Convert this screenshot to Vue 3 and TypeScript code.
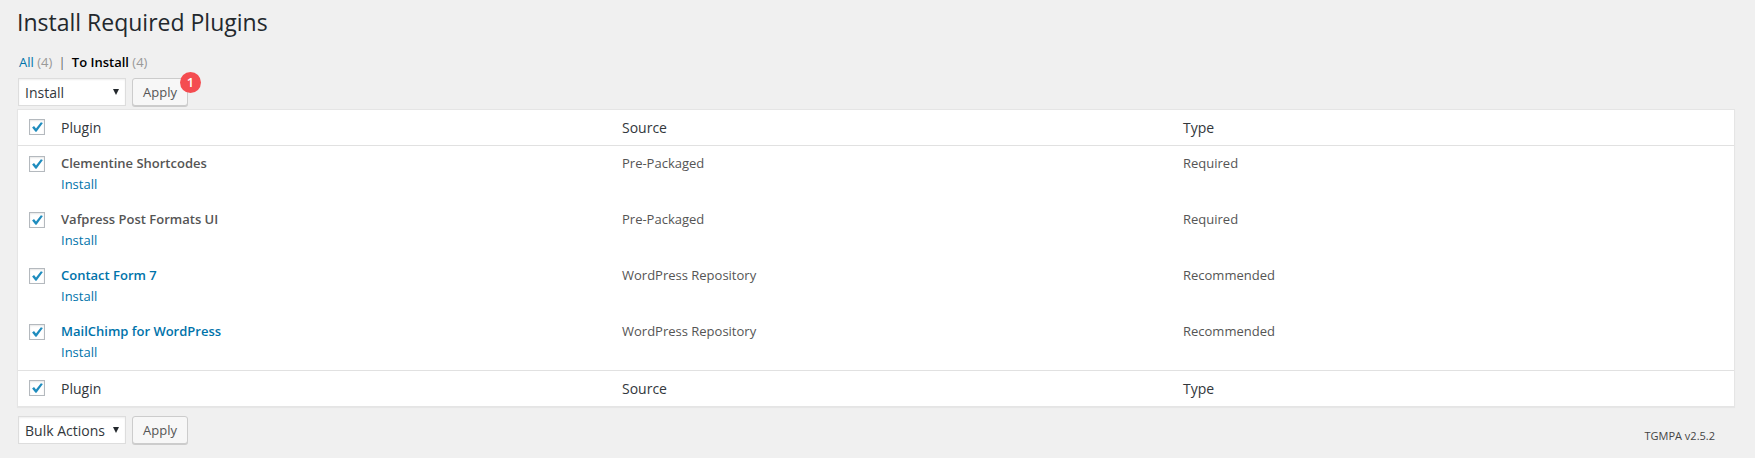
<script setup lang="ts">
import { reactive, ref } from 'vue'

interface Plugin {
  name: string
  source: string
  type: string
  linked: boolean
  checked: boolean
}

const plugins = reactive<Plugin[]>([
  { name: 'Clementine Shortcodes', source: 'Pre-Packaged', type: 'Required', linked: false, checked: true },
  { name: 'Vafpress Post Formats UI', source: 'Pre-Packaged', type: 'Required', linked: false, checked: true },
  { name: 'Contact Form 7', source: 'WordPress Repository', type: 'Recommended', linked: true, checked: true },
  { name: 'MailChimp for WordPress', source: 'WordPress Repository', type: 'Recommended', linked: true, checked: true },
])

const tick = 'M2.1 7.4L4 6.1L6 8.4L10.9 2.2L12.9 3L6.5 11.8H5.5Z'
const allChecked = ref(true)

function toggleAll(): void {
  allChecked.value = !allChecked.value
  plugins.forEach((p) => (p.checked = allChecked.value))
}
</script>

<template>
  <main class="page">
    <h1 class="title">Install Required Plugins</h1>
    <nav class="filters">
      <a class="link">All <span class="count">(4)</span></a>
      <span class="sep">|</span>
      <a class="current">To Install <span class="count">(4)</span></a>
    </nav>

    <div class="bar">
      <div class="select">
        <span>Install</span>
        <svg class="arrow" viewBox="0 0 6 6"><path d="M0 0H6L3 6Z" fill="#23282d" /></svg>
      </div>
      <button class="button" type="button">Apply<span class="badge">1</span></button>
    </div>

    <section class="table">
      <div class="row head">
        <span class="check" @click="toggleAll">
          <svg v-if="allChecked" viewBox="0 0 14 14"><path :d="tick" fill="#1e8cbe" /></svg>
        </span>
        <span>Plugin</span><span>Source</span><span>Type</span>
      </div>
      <div v-for="p in plugins" :key="p.name" class="row item">
        <span class="check" @click="p.checked = !p.checked">
          <svg v-if="p.checked" viewBox="0 0 14 14"><path :d="tick" fill="#1e8cbe" /></svg>
        </span>
        <div>
          <strong class="name" :class="{ linked: p.linked }">{{ p.name }}</strong>
          <a class="action">Install</a>
        </div>
        <span>{{ p.source }}</span>
        <span>{{ p.type }}</span>
      </div>
      <div class="row foot">
        <span class="check" @click="toggleAll">
          <svg v-if="allChecked" viewBox="0 0 14 14"><path :d="tick" fill="#1e8cbe" /></svg>
        </span>
        <span>Plugin</span><span>Source</span><span>Type</span>
      </div>
    </section>

    <div class="bar bottom">
      <div class="select">
        <span>Bulk Actions</span>
        <svg class="arrow" viewBox="0 0 6 6"><path d="M0 0H6L3 6Z" fill="#23282d" /></svg>
      </div>
      <button class="button" type="button">Apply</button>
      <span class="version">TGMPA v2.5.2</span>
    </div>
  </main>
</template>

<style>
body {
  background: #f0f0f0;
}
</style>

<style scoped>
.page {
  box-sizing: border-box;
  height: 458px;
  padding: 8px 20px 0 17px;
  overflow: hidden;
  background: #f0f0f0;
  color: #555;
  font: 13px/20px 'Open Sans', sans-serif;
}
.title {
  margin: 0;
  color: #23282d;
  font-size: 23px;
  font-weight: 400;
  line-height: 29px;
}
.filters {
  display: flex;
  margin-top: 15px;
  padding-left: 2px;
}
.link {
  color: #0073aa;
}
.current {
  color: #000;
  font-weight: 600;
}
.count {
  color: #999;
  font-weight: 400;
}
.sep {
  width: 19.5px;
  text-align: center;
  color: #666;
}
.bar {
  display: flex;
  align-items: flex-start;
  height: 31px;
  margin-top: 6px;
  padding-left: 1px;
}
.select {
  box-sizing: border-box;
  display: flex;
  align-items: center;
  justify-content: space-between;
  width: 108px;
  height: 28px;
  padding: 2px 6px 0;
  border: 1px solid #ddd;
  background: #fff;
  box-shadow: inset 0 1px 2px rgba(0, 0, 0, 0.07);
  color: #32373c;
  font-size: 14px;
}
.arrow {
  width: 6px;
  height: 6px;
  margin-bottom: 2px;
}
.button {
  position: relative;
  box-sizing: border-box;
  width: 56px;
  height: 28px;
  margin-left: 6px;
  padding: 0;
  border: 1px solid #ccc;
  border-radius: 3px;
  background: #f7f7f7;
  box-shadow: 0 1px 0 #ccc;
  color: #555;
  font: 13px/26px 'Open Sans', sans-serif;
}
.badge {
  position: absolute;
  top: -7px;
  right: -14px;
  width: 21px;
  height: 21px;
  border-radius: 50%;
  background: #f44c50;
  color: #fff;
  font: 600 13px/21px 'Open Sans', sans-serif;
  text-align: center;
}
.table {
  border: 1px solid #e5e5e5;
  background: #fff;
  box-shadow: 0 1px 1px rgba(0, 0, 0, 0.04);
}
.row {
  display: grid;
  grid-template-columns: 32px 561px 561px 1fr;
  box-sizing: border-box;
  padding-left: 11px;
}
.head,
.foot {
  height: 36px;
  padding-top: 8px;
  color: #32373c;
  font-size: 14px;
}
.head {
  border-bottom: 1px solid #e1e1e1;
}
.foot {
  border-top: 1px solid #e1e1e1;
}
.item {
  height: 56px;
  padding-top: 7px;
}
.check {
  box-sizing: border-box;
  width: 16px;
  height: 16px;
  margin-top: 1px;
  border: 1px solid #b4b9be;
  background: #fff;
  box-shadow: inset 0 1px 2px rgba(0, 0, 0, 0.1);
}
.item .check {
  margin-top: 3px;
}
.check svg {
  display: block;
  width: 14px;
  height: 14px;
}
.name {
  display: block;
  font-weight: 600;
}
.name.linked,
.action {
  color: #0073aa;
}
.action {
  display: block;
  margin-top: 1px;
}
.bottom {
  margin-top: 9px;
}
.version {
  margin: 10px 20px 0 auto;
  color: #444;
  font-size: 11px;
}
</style>
